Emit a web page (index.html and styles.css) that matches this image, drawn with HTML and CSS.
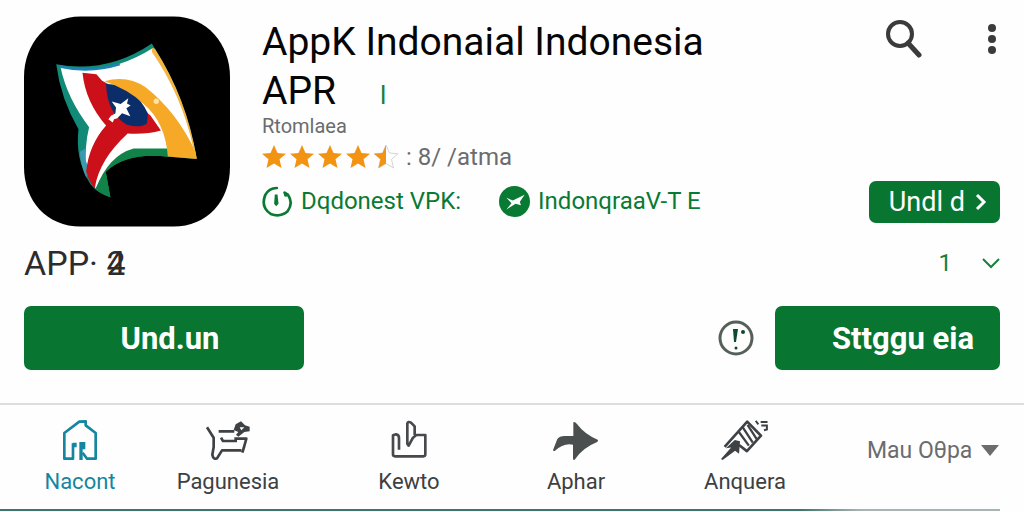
FILE: index.html
```html
<!DOCTYPE html>
<html lang="id">
<head>
<meta charset="utf-8">
<meta name="viewport" content="width=device-width, initial-scale=1">
<title>AppK Indonaial Indonesia APR</title>
<link rel="stylesheet" href="styles.css">
</head>
<body>
<main class="page">
  <header class="hero">
    <svg class="logo" viewBox="40 33 620 632" aria-hidden="true">
      <path d="M210 33H490C590 33 660 115 660 215V485C660 590 590 665 490 665H210C110 665 40 590 40 485V215C40 115 110 33 210 33Z" fill="#000"/>
      <path d="M137 177Q290 205 425 114L434 130Q530 280 560 462L474 455Q350 440 286 500L300 577Q262 566 240 538C205 480 198 430 204 372Q150 280 137 177Z" fill="#128a78"/>
      <path d="M150 186Q290 215 428 128L434 140Q530 290 558 460L474 432H370Q300 455 256 551L226 502Q222 420 236 366Q170 280 150 186Z" fill="#fff"/>
      <path d="M147 180Q240 201 325 172L330 180Q240 208 150 188Z" fill="#1b83b5"/>
      <path d="M208 440Q210 480 228 520L231 480Q222 460 224 430Z" fill="#3a9bb0"/>
      <path d="M256 551Q295 450 370 430H474V455Q350 440 286 500L300 577Q270 568 256 551Z" fill="#128348"/>
      <path d="M216 202L258 207L275 226L300 240L420 330L452 376Q410 388 352 385Q265 465 253 550Q236 530 227 500Q235 420 287 361Q225 290 216 202Z" fill="#cb1019"/>
      <path d="M287 236Q370 235 413 325L410 355Q390 370 350 359Q290 325 287 236Z" fill="#0b2e6b"/>
      <path d="M282 228Q350 208 406 246Q500 320 556 440L560 462L473 454Q465 350 400 296Q350 250 282 228Z" fill="#f6a827"/>
      <path d="M425 128L434 130Q530 280 560 462L550 430Q515 270 425 140Z" fill="#f6b540"/>
      <path d="M304 289L331 296L354 279L350 295L361 301L348 309L360 333L335 324L321 339L311 342L307 352L294 342L302 332L315 325L317 307Z" fill="#fff"/>
      <circle cx="438" cy="288" r="8" fill="#ffe3a6"/>
    </svg>

    <div class="info">
      <h1 class="title">AppK Indonaial Indonesia<br>APR<span class="title-mark">l</span></h1>
      <p class="publisher">Rtomlaea</p>
      <div class="rating">
        <svg class="stars" viewBox="0 0 136 24" role="img" aria-label="4,5">
          <defs><path id="star" d="M12 0L15.500 8L24 8.800L17.500 14.300L19.500 23L12 18.500L4.500 23L6.500 14.300L0 8.800L8.500 8Z"/></defs>
          <g fill="#f39314">
            <use href="#star"/><use href="#star" x="28"/><use href="#star" x="56"/><use href="#star" x="84"/>
          </g>
          <use href="#star" x="112" fill="#fff" stroke="#d4d4d4"/>
          <path d="M124 0V18.500L116.500 23L118.500 14.300L112 8.800L120.500 8Z" fill="#f39314"/>
        </svg>
        <span>: 8/ /atma</span>
      </div>
      <div class="badges">
        <a class="badge" href="#vpk">
          <svg class="badge-icon" viewBox="34 525 92 92" aria-hidden="true">
            <path d="M78 531Q54 531 43 553Q30 589 60 608Q88 619 110 600Q128 576 111 551L101 545" fill="none" stroke="#087a33" stroke-width="8" stroke-linecap="round"/>
            <path d="M72 550H80L83 578L76 585L70 578Z" fill="#087a33"/><circle cx="105" cy="551" r="6" fill="#087a33"/>
          </svg>
          Dqdonest VPK:
        </a>
        <a class="badge" href="#vte">
          <svg class="badge-icon" viewBox="748 527 92 92" aria-hidden="true">
            <circle cx="794" cy="573" r="46" fill="#087a33"/>
            <path d="M770 562L789 570L824 553L810 574L813 584L797 580L770 597L785 578Z" fill="#fff"/>
          </svg>
          IndonqraaV-T E
        </a>
      </div>
    </div>

    <div class="side">
      <div class="tools">
        <button class="icon-button" type="button" aria-label="Cari">
          <svg class="search" viewBox="0 0 36 38"><circle cx="14" cy="14" r="12" fill="none" stroke="#3b3b3b" stroke-width="4"/><path d="M22 23L33 35" stroke="#3b3b3b" stroke-width="5" stroke-linecap="round"/></svg>
        </button>
        <button class="icon-button" type="button" aria-label="Menu">
          <svg class="dots" viewBox="0 0 8 32" fill="#3b3b3b"><circle cx="4" cy="5" r="4"/><circle cx="4" cy="16" r="4"/><circle cx="4" cy="27" r="4"/></svg>
        </button>
      </div>
      <button class="button button-small" type="button">Undl d
        <svg class="arrow" viewBox="0 0 12 18" aria-hidden="true"><path d="M2 2L9 9L2 16" fill="none" stroke="#fff" stroke-width="3"/></svg>
      </button>
    </div>
  </header>

  <section class="version">
    <h2 class="version-name">APP· <span class="numeral"><span>2</span><span>4</span></span></h2>
    <button class="icon-button count" type="button">1
      <svg class="chevron" viewBox="0 0 18 12" aria-hidden="true"><path d="M1 2L9 10L17 2" fill="none" stroke="#16803c" stroke-width="2"/></svg>
    </button>
  </section>

  <section class="actions">
    <button class="button button-main" type="button">Und.un</button>
    <button class="icon-button info-button" type="button" aria-label="Info">
      <svg class="info-icon" viewBox="0 0 36 36"><circle cx="18" cy="18" r="16" fill="none" stroke="#56605b" stroke-width="3"/><path d="M15 9H20L18 22H16Z" fill="#0c4a2c"/><circle cx="18" cy="28" r="1.500" fill="#0c4a2c"/><circle cx="25" cy="12" r="2" fill="#0c4a2c"/></svg>
    </button>
    <button class="button button-second" type="button">Sttggu eia</button>
  </section>

  <nav class="tabs">
    <a class="tab tab-active" href="#nacont">
      <svg class="tab-icon" viewBox="92 62 120 120" aria-hidden="true"><path d="M131 132V178H105V101L150 67L169 66V78L199 101V178H173L160 160" fill="none" stroke="#1486a0" stroke-width="8" stroke-linejoin="round"/><path d="M130 130H142V144H130ZM150 128H168V150H160V182H150Z" fill="#1486a0"/></svg>
      Nacont
    </a>
    <a class="tab" href="#pagunesia">
      <svg class="tab-icon" viewBox="532 62 138 120" aria-hidden="true"><path d="M538 84L558 115V143L554 166Q557 182 568 177L583 153H641M573 96H620M580 115L586 125H628M620 118H656L650 140L644 160" fill="none" stroke="#3f4245" stroke-width="8" stroke-linejoin="round"/><path d="M618 92L624 75L640 66L652 78L666 82V96L650 98L632 112L625 106L632 98Z" fill="#3f4245"/><path d="M636 84L650 84L641 93Z" fill="#fff"/></svg>
      Pagunesia
    </a>
    <a class="tab" href="#kewto">
      <svg class="tab-icon" viewBox="85 62 120 120" aria-hidden="true"><path d="M115 151V118Q116 106 106 105L97 108V165Q97 171 103 171H188Q194 171 194 165V107H167L157 115L144 139L140 133V73Q142 65 151 70L162 81V107" fill="none" stroke="#48494c" stroke-width="8" stroke-linejoin="round"/></svg>
      Kewto
    </a>
    <a class="tab" href="#aphar">
      <svg class="tab-icon" viewBox="575 62 138 120" aria-hidden="true"><path d="M636 69Q640 66 647 74Q670 105 709 121Q712 124 706 129Q665 145 640 181Q636 185 635 177V136Q607 130 580 155Q574 156 576 150L588 119Q594 110 610 110H636Z" fill="#4c4f50"/></svg>
      Aphar
    </a>
    <a class="tab" href="#anquera">
      <svg class="tab-icon" viewBox="95 69 146 122" aria-hidden="true"><path d="M106 151L175 74L217 117L174 164L150 145" fill="none" stroke="#3f4245" stroke-width="8" stroke-linejoin="round"/><path d="M161 91L192 138M149 105L180 147M176 84L204 127" stroke="#3f4245" stroke-width="7"/><path d="M95 188L126 153L110 155L137 130L153 134L150 172L138 163L100 191Z" fill="#3f4245"/><path d="M201 72L209 82M216 75H237M218 86H235V98L226 100" fill="none" stroke="#3f4245" stroke-width="6"/></svg>
      Anquera
    </a>
    <label class="more">
      <select class="more-select" aria-label="Mau Oθpa"><option>Mau Oθpa</option></select>
      <svg class="caret" viewBox="0 0 18 11" aria-hidden="true"><path d="M0 0H18L9 11Z" fill="#6a6c6e"/></svg>
    </label>
  </nav>
  <div class="strip"></div>
</main>
</body>
</html>
```
FILE: styles.css
```css
* { box-sizing: border-box; }

body {
  margin: 0;
  background: #fefefe;
  color: #3c4043;
  font-family: Roboto, "Liberation Sans", sans-serif;
}

.page { overflow: hidden; }

h1, h2, p { margin: 0; font-weight: 400; }
svg { display: block; flex: none; }
a { text-decoration: none; }
button, select { font-family: inherit; }

.hero {
  display: flex;
  gap: 32px;
  padding: 16px 24px 0;
}

.logo { width: 206px; height: 211px; }

.info { flex: 1; padding-top: 2px; }

.title {
  color: #050505;
  font-size: 39px;
  line-height: 49px;
  white-space: nowrap;
}

.title-mark {
  margin-left: 44px;
  color: #16803c;
  font-size: 26px;
  line-height: 1;
}

.publisher {
  color: #6a6c6e;
  font-size: 20px;
  line-height: 20px;
}

.rating {
  display: flex;
  align-items: center;
  gap: 8px;
  padding-top: 7px;
  color: #6a6c6e;
  font-size: 24px;
  line-height: 28px;
}

.stars { width: 136px; height: 24px; overflow: visible; }

.badges {
  display: flex;
  gap: 38px;
  padding-top: 14px;
}

.badge {
  display: flex;
  align-items: center;
  gap: 8px;
  color: #087a33;
  font-size: 24px;
  line-height: 32px;
  white-space: nowrap;
}

.badge-icon { width: 31px; height: 31px; }

.side {
  display: flex;
  flex-direction: column;
  justify-content: space-between;
  align-items: flex-end;
  padding: 4px 0;
}

.tools {
  display: flex;
  align-items: center;
  gap: 66px;
  padding-right: 4px;
}

.icon-button {
  padding: 0;
  border: 0;
  background: none;
  cursor: pointer;
}

.search { width: 36px; height: 38px; }
.dots { width: 8px; height: 32px; }

.button {
  border: 0;
  border-radius: 7px;
  background: #087630;
  color: #fff;
  cursor: pointer;
}

.button-small {
  display: flex;
  align-items: center;
  gap: 10px;
  height: 42px;
  padding: 0 13px 0 20px;
  font-size: 27px;
}

.arrow { width: 12px; height: 18px; }

.version {
  display: flex;
  align-items: center;
  justify-content: space-between;
  padding: 16px 24px 0;
}

.version-name {
  color: #2c2c2e;
  font-size: 34px;
  line-height: 40px;
}

.numeral { display: inline-grid; }
.numeral > span { grid-area: 1 / 1; }

.count {
  display: flex;
  align-items: center;
  gap: 30px;
  color: #16803c;
  font-size: 24px;
}

.chevron { width: 18px; height: 12px; }

.actions {
  display: flex;
  align-items: center;
  padding: 23px 24px 33px;
}

.button-main,
.button-second {
  height: 64px;
  font-size: 31px;
  font-weight: 700;
}

.button-main { width: 280px; padding-left: 18px; }
.info-button { margin: 0 21px 0 auto; }
.info-icon { width: 36px; height: 36px; }
.button-second { width: 225px; padding: 0 26px; text-align: right; }

.tabs {
  display: grid;
  grid-template-columns: 160fr 136fr 226fr 108fr 230fr 164fr;
  border-top: 2px solid #dcdddf;
  padding: 15px 0 14px;
}

.tab {
  display: flex;
  flex-direction: column;
  align-items: center;
  gap: 9px;
  color: #3c4043;
  font-size: 22px;
  line-height: 26px;
}

.tab-active { color: #1486a0; }
.tab-icon { height: 40px; }

.more {
  display: flex;
  align-items: center;
  gap: 8px;
  padding-left: 7px;
  padding-bottom: 14px;
}

.more-select {
  appearance: none;
  padding: 0;
  border: 0;
  background: none;
  color: #6a6c6e;
  font-size: 23px;
}

.caret { width: 18px; height: 11px; }

.strip {
  height: 2px;
  margin-right: 24px;
  background: linear-gradient(90deg, #3f7568 80%, #a9b3b3 86%);
}
```
